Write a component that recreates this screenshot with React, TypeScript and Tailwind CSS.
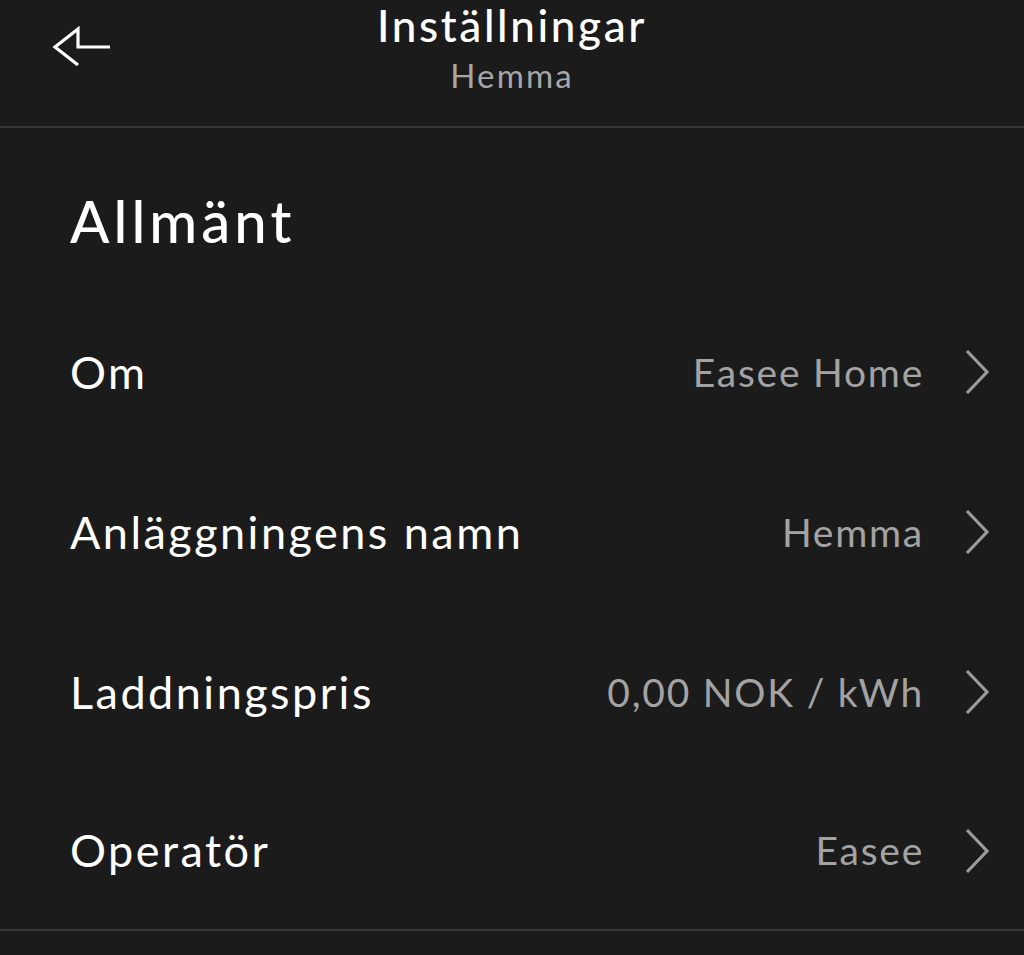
// Inställningar — settings screen for a charging site ("Hemma").
// Header with back arrow + centered title/subtitle, then the "Allmänt" section list.

type Row = {
  label: string;
  value: string;
};

const ROWS: Row[] = [
  { label: "Om", value: "Easee Home" },
  { label: "Anläggningens namn", value: "Hemma" },
  { label: "Laddningspris", value: "0,00 NOK / kWh" },
  { label: "Operatör", value: "Easee" },
];

const FONT = "font-['Lato','Noto_Sans',sans-serif]";

function BackArrow() {
  return (
    <svg width="64" height="44" viewBox="0 0 64 44" fill="none" aria-hidden>
      <path
        d="M28 39 L5 21 L28 3 V21 H60"
        stroke="#ffffff"
        strokeWidth="3.2"
        strokeLinejoin="miter"
      />
    </svg>
  );
}

function Chevron() {
  return (
    <svg width="26" height="48" viewBox="0 0 26 48" fill="none" aria-hidden>
      <path d="M3 3 L23 24 L3 45" stroke="#9b9b9b" strokeWidth="3.2" />
    </svg>
  );
}

export default function App() {
  return (
    <div className={`min-h-[955px] w-full bg-[#1b1b1b] text-white ${FONT}`}>
      {/* header */}
      <header className="grid h-[128px] grid-cols-[1fr_auto_1fr] border-b-2 border-[#363636]">
        <div className="pl-[50px] pt-[26px]">
          <BackArrow />
        </div>
        <div className="flex flex-col items-center pt-[3px]">
          <h1 className="text-[44px] font-medium leading-none tracking-[0.06em] text-white">
            Inställningar
          </h1>
          <p className="mt-[12px] text-[33px] leading-none tracking-[0.065em] text-[#a6a6a6]">
            Hemma
          </p>
        </div>
        <div />
      </header>

      {/* section */}
      <section className="border-b-2 border-[#363636]">
        <h2 className="pl-[70px] pt-[64px] text-[58px] font-medium leading-none tracking-[0.07em] text-white">
          Allmänt
        </h2>
        <ul className="mt-[42px]">
          {ROWS.map((r) => (
            <li
              key={r.label}
              className="flex h-[160px] items-center pl-[70px] pr-[34px] last:h-[157px]"
            >
              <span className="flex-1 text-[45px] leading-none tracking-[0.055em] text-white">
                {r.label}
              </span>
              <span className="text-[39px] leading-none tracking-[0.045em] text-[#a3a3a3]">
                {r.value}
              </span>
              <span className="ml-[40px] flex">
                <Chevron />
              </span>
            </li>
          ))}
        </ul>
      </section>
    </div>
  );
}
